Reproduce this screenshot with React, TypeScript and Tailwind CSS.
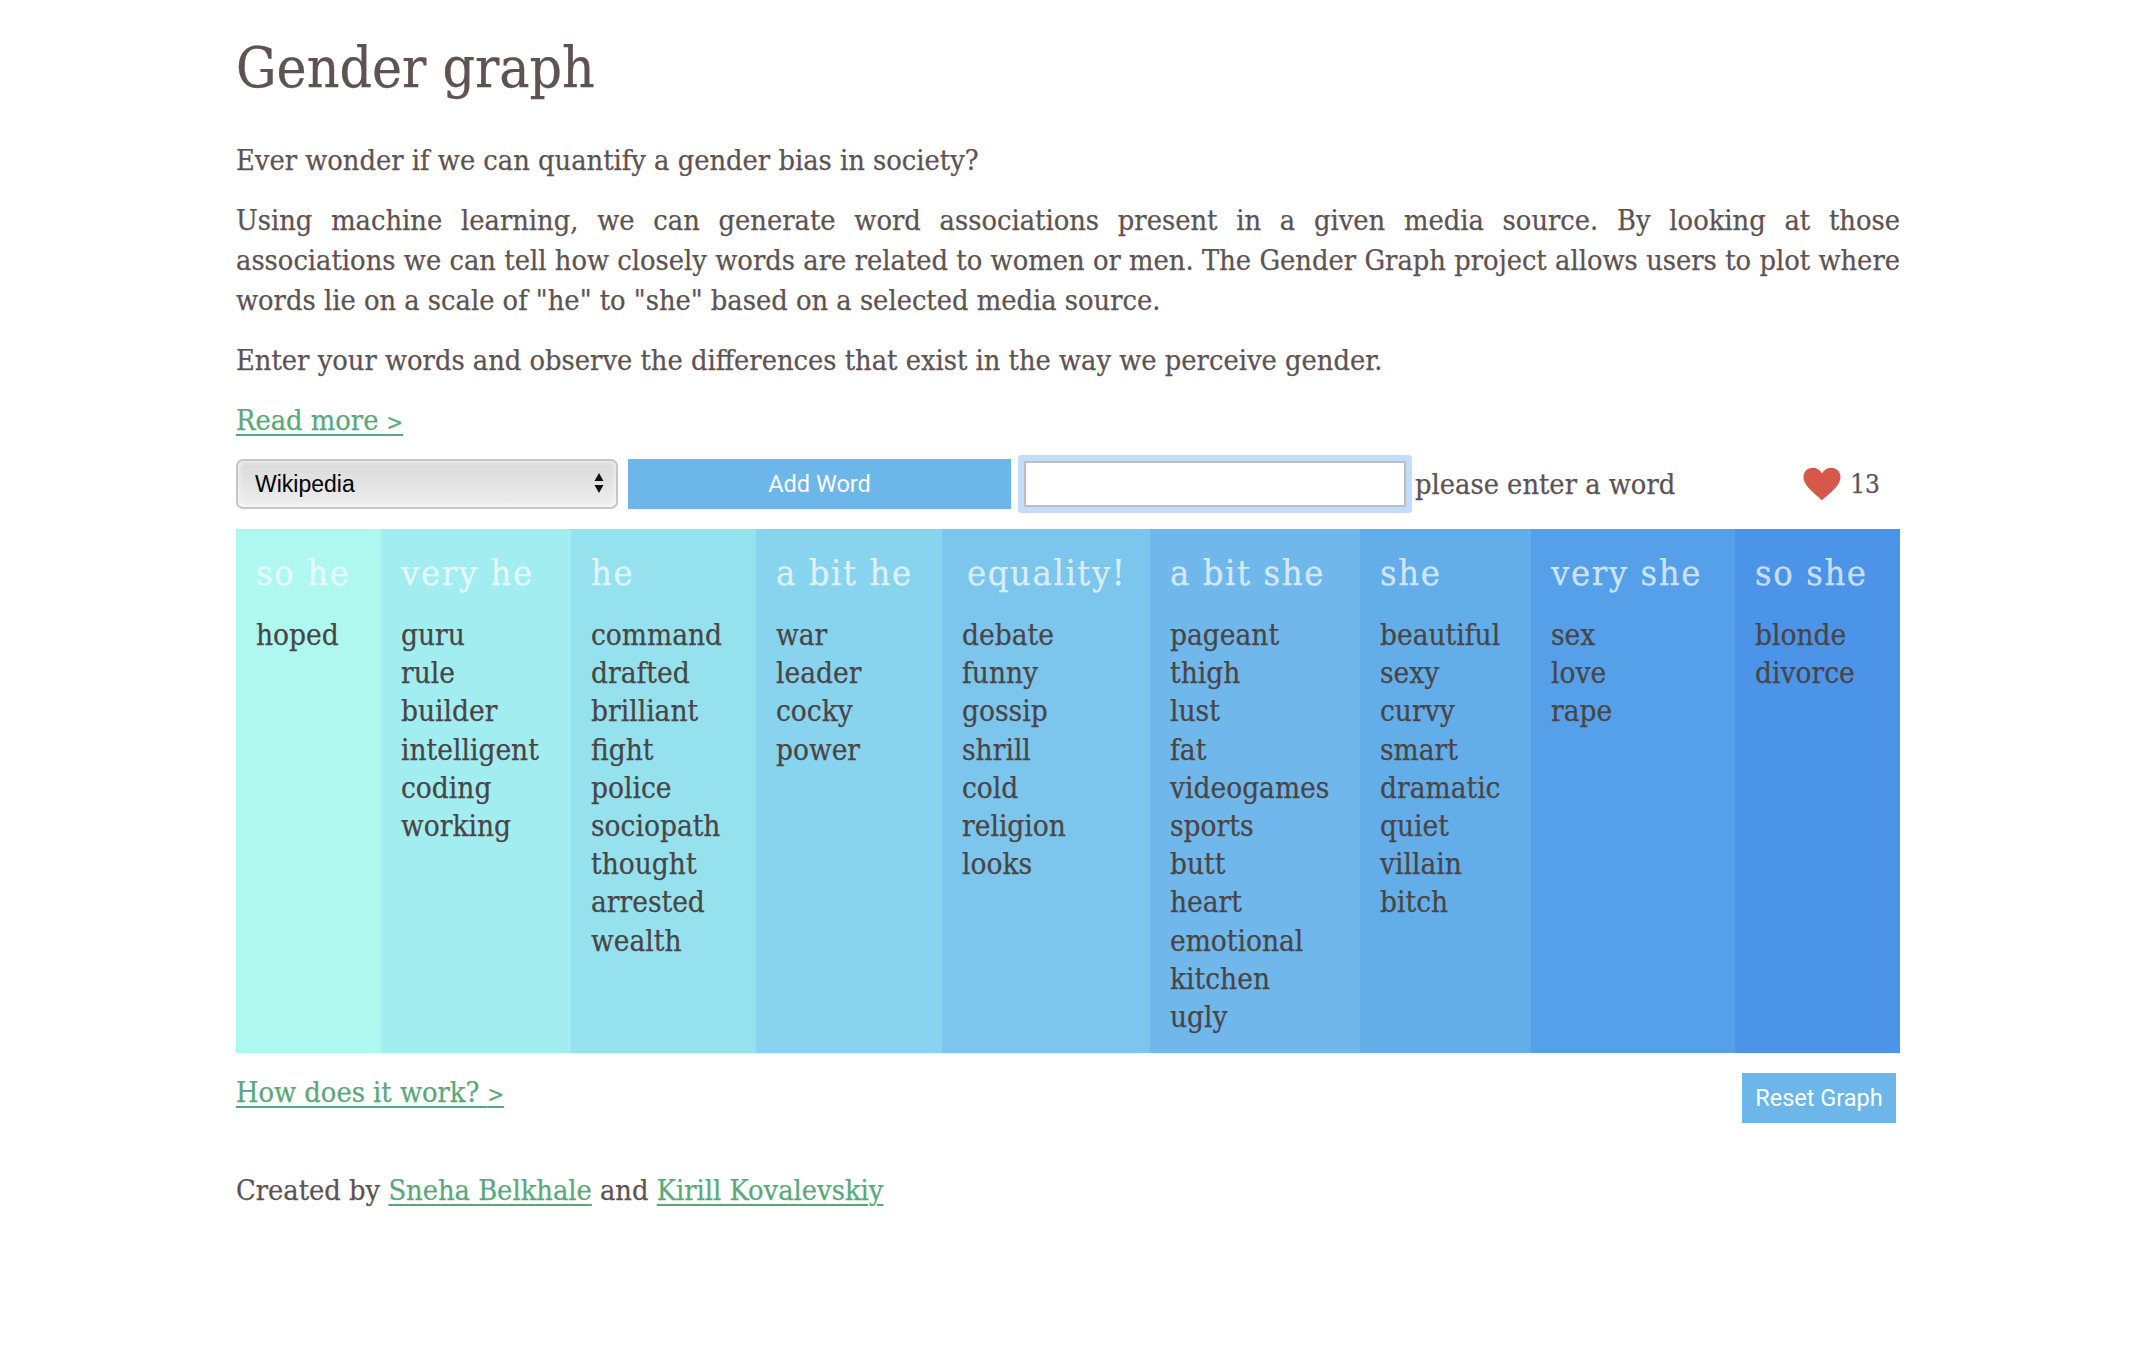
const columns = [
  { title: 'so he', bg: 'bg-[#aff8ef]', width: 'w-[145px]', words: ['hoped'] },
  { title: 'very he', bg: 'bg-[#a2edf0]', width: 'w-[190px]', words: ['guru', 'rule', 'builder', 'intelligent', 'coding', 'working'] },
  { title: 'he', bg: 'bg-[#95e1ee]', width: 'w-[185px]', words: ['command', 'drafted', 'brilliant', 'fight', 'police', 'sociopath', 'thought', 'arrested', 'wealth'] },
  { title: 'a bit he', bg: 'bg-[#88d4ee]', width: 'w-[186px]', words: ['war', 'leader', 'cocky', 'power'] },
  { title: 'equality!', bg: 'bg-[#7cc5ec]', width: 'w-[208px]', words: ['debate', 'funny', 'gossip', 'shrill', 'cold', 'religion', 'looks'] },
  { title: 'a bit she', bg: 'bg-[#70b7eb]', width: 'w-[210px]', words: ['pageant', 'thigh', 'lust', 'fat', 'videogames', 'sports', 'butt', 'heart', 'emotional', 'kitchen', 'ugly'] },
  { title: 'she', bg: 'bg-[#63aee9]', width: 'w-[171px]', words: ['beautiful', 'sexy', 'curvy', 'smart', 'dramatic', 'quiet', 'villain', 'bitch'] },
  { title: 'very she', bg: 'bg-[#569fe9]', width: 'w-[204px]', words: ['sex', 'love', 'rape'] },
  { title: 'so she', bg: 'bg-[#4b94e8]', width: 'w-[165px]', words: ['blonde', 'divorce'] },
]

const linkClass = 'text-[#5aa87a] underline decoration-2 underline-offset-[4px]'

const JustifiedLine = ({ text }: { text: string }) => (
  <span className="block [text-align-last:justify]">{text}</span>
)

export default function App() {
  return (
    <div className="min-h-[1356px] bg-white font-['DejaVu_Serif_Condensed','DejaVu_Serif',serif] text-[28.7px] leading-[40px] text-[#5e5252] [-webkit-text-stroke:0.25px]">
      <div className="ml-[236px] w-[1664px] pt-[30px]">
        <h1 className="text-[56.5px] leading-[76px]">Gender graph</h1>
        <p className="mt-[34px]">Ever wonder if we can quantify a gender bias in society?</p>
        <p className="mt-[20px]">
          <JustifiedLine text="Using machine learning, we can generate word associations present in a given media source. By looking at those" />
          <JustifiedLine text="associations we can tell how closely words are related to women or men. The Gender Graph project allows users to plot where" />
          <span className="block">words lie on a scale of "he" to "she" based on a selected media source.</span>
        </p>
        <p className="mt-[20px]">Enter your words and observe the differences that exist in the way we perceive gender.</p>
        <p className="mt-[20px]">
          <a href="#" className={linkClass}>Read more <span className="text-[22px]">&gt;</span></a>
        </p>

        <div className="mt-[16px] flex h-[50px] items-center">
          <div className="relative h-[50px] w-[382px]">
            <select className="h-full w-full appearance-none rounded-[7px] border-2 border-[#c6c6c6] bg-gradient-to-b from-[#d9d9d9] to-[#eeeeee] pl-[17px] font-['Liberation_Sans',sans-serif] text-[23px] text-black shadow-[inset_0_0_6px_rgba(255,255,255,0.9)] [-webkit-text-stroke:0]">
              <option>Wikipedia</option>
            </select>
            <svg className="absolute right-[14px] top-[14px]" width="10" height="20" viewBox="0 0 10 20">
              <path d="M5 0l4.500 8h-9zM5 20l-4.500-8h9z" fill="#111" />
            </svg>
          </div>
          <button className="ml-[10px] h-[50px] w-[383px] bg-[#6db6ea] font-['Roboto',sans-serif] text-[23.5px] text-white [-webkit-text-stroke:0]">
            Add Word
          </button>
          <input className="ml-[13px] h-[46px] w-[382px] rounded-[1px] border-2 border-[#bdbdbd] bg-white shadow-[0_0_0_6px_#c3dcfb] outline-none" />
          <span className="ml-[9px]">please enter a word</span>
          <svg className="ml-auto" width="38" height="34" viewBox="0 0 24 22">
            <path d="M12 21.500C5 15.500 0 11.500 0 6.500 0 3 2.700.5 6 .5c2.400 0 4.700 1.300 6 3.600C13.300 1.800 15.600.5 18 .5c3.300 0 6 2.500 6 6 0 5-5 9-12 15z" fill="#d6584a" />
          </svg>
          <span className="ml-[9px] mr-[20px] text-[26px]">13</span>
        </div>

        <div className="mt-[20px] flex h-[524px]">
          {columns.map((col) => (
            <div key={col.title} className={`${col.bg} ${col.width} pl-[20px] pt-[22px]`}>
              <h2 className={`text-[36px] leading-[44px] tracking-[1.6px] text-white/70 ${col.title === 'equality!' ? 'pl-[5px]' : ''}`}>
                {col.title}
              </h2>
              <ul className="mt-[21px] text-[29.5px] leading-[38.2px] text-[#4a4545]">
                {col.words.map((word) => (
                  <li key={word}>{word}</li>
                ))}
              </ul>
            </div>
          ))}
        </div>

        <div className="mt-[20px] flex items-start justify-between pr-[4px]">
          <a href="#" className={`${linkClass} -mt-[1px]`}>How does it work? <span className="text-[22px]">&gt;</span></a>
          <button className="h-[50px] w-[154px] bg-[#6db6ea] font-['Roboto',sans-serif] text-[23.5px] text-white [-webkit-text-stroke:0]">
            Reset Graph
          </button>
        </div>

        <p className="mt-[47px]">
          Created by <a href="#" className={linkClass}>Sneha Belkhale</a> and{' '}
          <a href="#" className={linkClass}>Kirill Kovalevskiy</a>
        </p>
      </div>
    </div>
  )
}
